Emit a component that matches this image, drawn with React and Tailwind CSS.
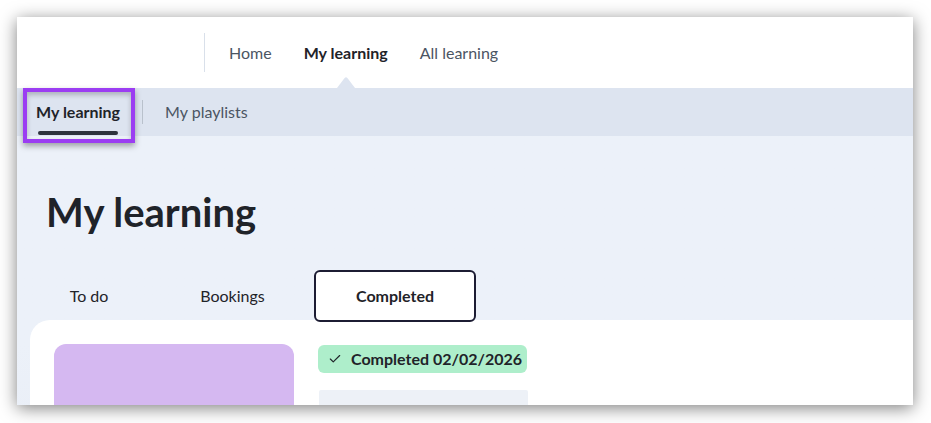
import React from 'react'
import { Check } from 'lucide-react'

const font = { fontFamily: 'Lato, "Noto Sans", sans-serif' }

function TopNav() {
  return (
    <div className="flex h-[71px] shrink-0 items-stretch bg-white">
      <div className="w-[187px]" />
      <div className="my-[16px] w-px bg-[#d9e0ea]" />
      <nav className="flex items-stretch pl-[8px] text-[16px]">
        <a className="flex items-center px-4 text-[#4b5563]">Home</a>
        <a className="relative flex items-center px-4 font-bold text-[#1f2329]">
          My learning
          <svg
            className="absolute bottom-0 left-1/2 -translate-x-1/2"
            width="18"
            height="11"
            viewBox="0 0 18 11"
          >
            <path d="M0 11 L7.6 1 Q9 -0.6 10.4 1 L18 11 Z" fill="#dde4f0" />
          </svg>
        </a>
        <a className="flex items-center px-4 text-[#4b5563]">All learning</a>
      </nav>
    </div>
  )
}

function SubNav() {
  return (
    <div className="relative z-10 flex h-[48px] shrink-0 items-center bg-[#dde4f0] px-[19px] text-[16px]">
      <div className="relative flex h-full items-center font-bold text-[#1f2329]">
        My learning
        <span className="absolute bottom-[1px] left-[2px] right-[2px] h-[4px] rounded-sm bg-[#2d333d]" />
        <span className="pointer-events-none absolute -bottom-[7px] -left-[13px] -right-[15px] top-0 border-[4px] border-[#9b3df2] shadow-[0_3px_6px_rgba(0,0,0,0.35),inset_0_3px_5px_rgba(0,0,0,0.22)]" />
      </div>
      <div className="mx-[22px] h-[24px] w-px bg-[#b9c1cc]" />
      <div className="text-[#4b5563]">My playlists</div>
    </div>
  )
}

function Tabs() {
  return (
    <div className="relative z-10 -mb-[2px] ml-[10px] flex shrink-0 gap-[6px] text-[16px]">
      <button className="flex h-[52px] w-[124px] items-center justify-center text-[#1f2329]">To do</button>
      <button className="flex h-[52px] w-[151px] items-center justify-center text-[#1f2329]">Bookings</button>
      <button className="flex h-[52px] w-[162px] items-center justify-center rounded-[6px] border-2 border-[#1c1c33] bg-white font-bold text-[#1f2329]">
        Completed
      </button>
    </div>
  )
}

function Card() {
  return (
    <div className="ml-[13px] flex shrink-0 gap-[24px] rounded-tl-[20px] bg-white pb-[20px] pl-[24px] pt-[24px]">
      <div className="h-[120px] w-[240px] shrink-0 rounded-[12px] bg-[#d5b8f1]" />
      <div className="flex flex-col pt-[1px]">
        <div className="flex h-[28px] w-[209px] items-center gap-[9px] rounded-[6px] bg-[#aeeecb] pl-[10px] text-[16px] font-bold text-[#1f2329]">
          <Check size={14} strokeWidth={2} className="shrink-0" />
          <span>Completed 02/02/2026</span>
        </div>
        <div className="ml-[1px] mt-[17px] h-[60px] w-[209px] rounded-t-[2px] bg-[#edf1f7]" />
      </div>
    </div>
  )
}

export default function App() {
  return (
    <div className="h-[423px] w-[931px] overflow-hidden bg-white pl-[17px] pt-[17px]" style={font}>
      <div className="flex h-[388px] w-[896px] flex-col overflow-hidden bg-white shadow-[0_3px_16px_rgba(0,0,0,0.5)]">
        <TopNav />
        <SubNav />
        <main className="flex shrink-0 flex-col bg-gradient-to-b from-[#ecf1f9] from-60% to-[#e8edf6]">
          <h1 className="shrink-0 pl-[29px] pt-[52px] text-[40px] font-bold leading-[48px] text-[#1f2329]">My learning</h1>
          <div className="mt-[34px] shrink-0">
            <Tabs />
          </div>
          <Card />
        </main>
      </div>
    </div>
  )
}
